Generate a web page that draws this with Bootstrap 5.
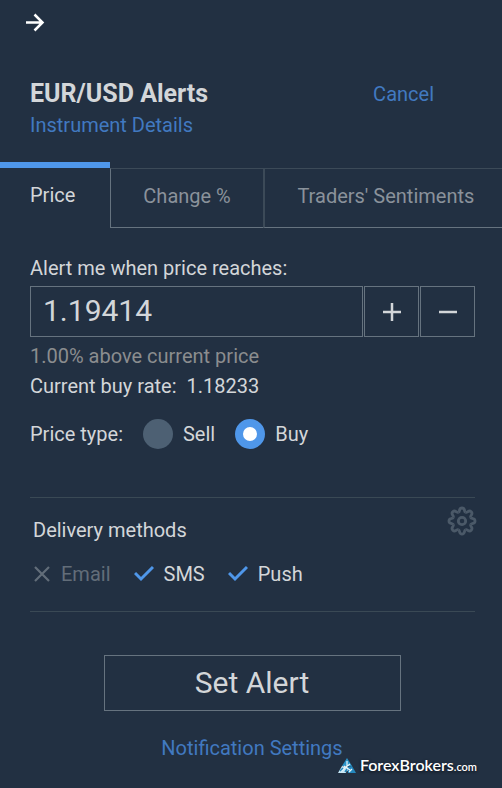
<!DOCTYPE html>
<html lang="en">
<head>
<meta charset="utf-8">
<meta name="viewport" content="width=device-width, initial-scale=1">
<title>EUR/USD Alerts</title>
<link href="https://cdn.jsdelivr.net/npm/bootstrap@5.3.0/dist/css/bootstrap.min.css" rel="stylesheet">
<style>
body{background:#223042;color:#d3d6d9;font-family:Roboto,"Liberation Sans",sans-serif;font-size:20px;line-height:30px}
svg{display:block}
a,.plain-btn.cancel-btn{color:#4179c0;text-decoration:none}
.inset{padding-left:30px;padding-right:27px}
.top-bar{padding-top:12px;padding-left:24px}
.plain-btn{background:none;border:0;padding:0;color:inherit}
.heading-row{padding-top:36px}
.heading-row h1{font-size:25px;line-height:32px;font-weight:700}
.cancel-btn{margin:1px 41px 0 0}
.alert-tabs{margin-top:22px}
.alert-tabs button{background:none;border:1px solid #3c4a58;border-bottom-color:#66737f;border-right:0;color:#8a929b;height:60px;margin-top:6px;padding:0 32px 4px 32px;white-space:nowrap}
.alert-tabs button:last-child{flex:1 0 auto;padding-right:27px;border-left-width:2px}
.alert-tabs button.active{color:#d3d6d9;border:0;border-top:6px solid #4f97ea;height:66px;margin-top:0;padding:0 35px 6px 30px}
.alert-tabs button.active+button{border-left-color:#66737f}
.price-form{padding-top:25px}
.price-row{gap:1px;margin-top:3px}
.price-row input{background:none;border:1px solid #66737f;color:#d3d6d9;font-size:30px;height:51px;padding:0 13px 3px 12px;min-width:0;border-radius:0}
.price-row button{flex:0 0 55px;height:51px;border:1px solid #66737f}
.hint{color:#8b8d8f;margin-top:4px}
.type-row{margin-top:18px}
.type-row input{appearance:none;width:30px;height:30px;border-radius:50%;background:#4d6073;margin:0 10px 0 20px}
.type-row input:checked{background:#fff;border:8px solid #4f97ea}
.delivery{margin:48px 27px 0 30px;border:solid #3a4955;border-width:1px 0;padding:8px 0 22px 3px}
.delivery .gear{margin-right:-2px}
.delivery h2{font-size:20px;line-height:30px;font-weight:400;padding-top:9px}
.methods{margin-top:14px;gap:23px}
.methods .off{color:#626d79}
.methods>span{gap:10px}
.submit-btn{display:block;width:297px;max-width:100%;height:56px;font-size:30px}
.plain-btn.submit-btn{border:1px solid #66737f}
.actions{padding:43px 0 0 2px}
.foot{padding:22px 0 24px}
.brand{right:25px;bottom:10px;color:#fff;font-family:Lato,sans-serif;font-size:16px;line-height:20px;font-weight:600;gap:4px;text-shadow:0 1px 3px #0b1119}
.brand small{font-size:11px}
</style>
</head>
<body>
<main>
<div class="top-bar"><button class="plain-btn" aria-label="Close panel"><svg width="22" height="22" viewBox="0 0 22 22" fill="none" stroke="#fff" stroke-width="2.500"><path d="M2 10.500H18.500M10.500 2.500L18.500 10.500L10.500 18.500"/></svg></button></div>
<header class="heading-row inset d-flex justify-content-between align-items-start">
<div><h1 class="mb-0">EUR/USD Alerts</h1><a href="#">Instrument Details</a></div>
<button class="plain-btn cancel-btn">Cancel</button>
</header>
<div class="alert-tabs d-flex overflow-hidden" role="tablist">
<button class="active" role="tab" aria-selected="true">Price</button>
<button role="tab" aria-selected="false">Change %</button>
<button role="tab" aria-selected="false">Traders' Sentiments</button>
</div>
<form class="price-form inset">
<label for="price" class="d-block">Alert me when price reaches:</label>
<div class="price-row d-flex">
<input id="price" class="flex-grow-1" type="text" value="1.19414">
<button type="button" class="plain-btn d-flex align-items-center justify-content-center" aria-label="Increase"><svg width="18" height="18" stroke="#d3d6d9" stroke-width="2.500"><path d="M0 9H18M9 0V18"/></svg></button>
<button type="button" class="plain-btn d-flex align-items-center justify-content-center" aria-label="Decrease"><svg width="18" height="18" stroke="#d3d6d9" stroke-width="2.500"><path d="M0 9H18"/></svg></button>
</div>
<div class="hint">1.00% above current price</div>
<div>Current buy rate:&nbsp; 1.18233</div>
<div class="type-row d-flex align-items-center"><span>Price type:</span>
<input type="radio" name="type" id="sell"><label for="sell">Sell</label>
<input type="radio" name="type" id="buy" checked><label for="buy">Buy</label></div>
</form>
<section class="delivery">
<div class="d-flex justify-content-between align-items-start"><h2 class="mb-0">Delivery methods</h2>
<button class="plain-btn gear" aria-label="Delivery settings"><svg width="30" height="30" viewBox="-15 -15 30 30" fill="none" stroke="#4b5968" stroke-width="2.800"><defs><path id="tooth" d="M-3.600 -8.700C-2.500 -9.160 -2.700 -10 -2.400 -11C-1.800 -13.700 1.800 -13.700 2.400 -11C2.700 -10 2.500 -9.160 3.600 -8.700"/></defs><use href="#tooth"/><use href="#tooth" transform="rotate(45)"/><use href="#tooth" transform="rotate(90)"/><use href="#tooth" transform="rotate(135)"/><use href="#tooth" transform="rotate(180)"/><use href="#tooth" transform="rotate(225)"/><use href="#tooth" transform="rotate(270)"/><use href="#tooth" transform="rotate(315)"/><circle r="3.700"/></svg></button></div>
<div class="methods d-flex">
<span class="off d-flex align-items-center"><svg width="18" height="18" fill="none" stroke="currentColor" stroke-width="2.200"><path d="M2 2L16 16M16 2L2 16"/></svg>Email</span>
<span class="d-flex align-items-center"><svg width="20" height="18" fill="none" stroke="#4f97ea" stroke-width="3"><path d="M1 8L7 14L19 2"/></svg>SMS</span>
<span class="d-flex align-items-center"><svg width="20" height="18" fill="none" stroke="#4f97ea" stroke-width="3"><path d="M1 8L7 14L19 2"/></svg>Push</span>
</div>
</section>
<div class="actions">
<button class="plain-btn submit-btn mx-auto">Set Alert</button>
<footer class="foot position-relative text-center"><a href="#">Notification Settings</a>
<div class="brand position-absolute d-flex align-items-center"><svg width="18" height="16" viewBox="0 0 18 16"><path d="M9 0L14 8H4Z" fill="#2b93c8"/><path d="M4 8L0 15H8L9 9Z" fill="#c8e7f5"/><path d="M14 8L18 15H10L9 9Z" fill="#2487bd"/><path d="M9 3V13M6 8L12 12M12 6L8 9M3 13L7 10M11 14L14 11" stroke="#e9f7fc" stroke-width="1.200"/><path d="M2 13L5 10M7 14L9 11" stroke="#2487bd" stroke-width="1.500"/></svg><span>ForexBrokers<small>.com</small></span></div>
</footer>
</div>
</main>
<script src="https://cdn.jsdelivr.net/npm/bootstrap@5.3.0/dist/js/bootstrap.bundle.min.js"></script>
</body>
</html>
